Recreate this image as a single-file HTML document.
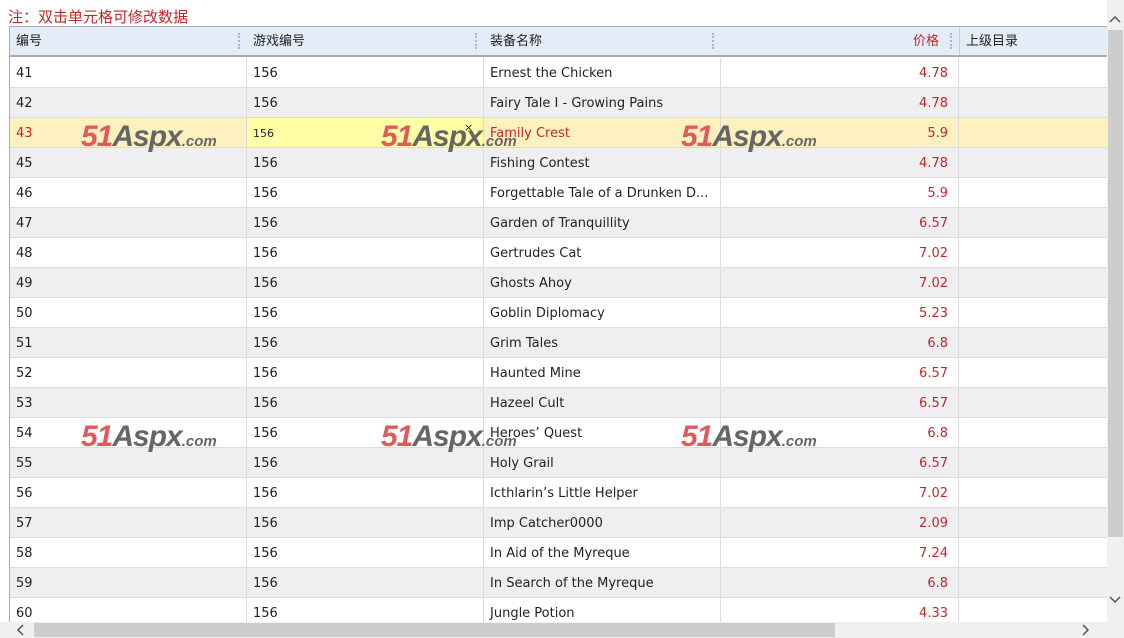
<!DOCTYPE html>
<html><head><meta charset="utf-8"><style>
*{margin:0;padding:0;box-sizing:border-box}
body{width:1124px;height:638px;overflow:hidden;background:#fff;position:relative;font-family:"DejaVu Sans","Liberation Sans","Noto Sans CJK SC",sans-serif;font-size:13px;color:#222}
.note{position:absolute;left:8px;top:6px;color:#c0282a;font-size:15px;font-family:"Liberation Sans","Noto Sans CJK SC",sans-serif}
.grid{position:absolute;left:9px;top:26px;width:1098px;height:596px;border-left:1px solid #a8adb5;border-top:1px solid #a8adb5;overflow:hidden}
.hdr{position:absolute;left:0;top:0;width:1098px;height:30px;background:#e3ecf7;border-bottom:2px solid #a8adb5;font-family:"Liberation Sans","Noto Sans CJK SC",sans-serif;font-size:13px}
.hdr div{position:absolute;top:0;height:28px;line-height:28px;padding:0 6px}
.dots{position:absolute;top:6px;width:0;height:16px;border-left:2px dotted #b0b4bb}
.row{position:absolute;left:0;width:1098px;height:30px;border-bottom:1px solid #dcdcdc}
.row div{position:absolute;top:0;height:29px;line-height:31px;padding:0 6px;border-right:1px solid #dcdcdc}
.c1{left:0;width:237px}.c2{left:237px;width:237px}.c3{left:474px;width:237px}.c4{left:711px;width:238px;text-align:right;color:#c0282a;padding-right:10px!important}.c5{left:949px;width:149px;border-right:none!important}
.alt{background:#efeff2}
.wm{position:absolute;font-family:"Liberation Sans",sans-serif;font-weight:bold;font-style:italic;font-size:30px;letter-spacing:-1px;line-height:30px;white-space:nowrap}
.wm b{color:#e05a5a}.wm i{color:#666;font-style:italic}.wm s{text-decoration:none;font-size:15px;color:#666;font-weight:bold;letter-spacing:0}
.vs{position:absolute;left:1107px;top:0;width:17px;height:622px;background:#f0f0f0}
.hs{position:absolute;left:0;top:622px;width:1124px;height:16px;background:#f0f0f0}
</style></head><body>
<div class="note">注：双击单元格可修改数据</div>
<div class="grid">
<div class="hdr">
<div style="left:0">编号</div><span class="dots" style="left:228px"></span>
<div style="left:237px">游戏编号</div><span class="dots" style="left:465px"></span>
<div style="left:474px">装备名称</div><span class="dots" style="left:702px"></span>
<div style="left:711px;width:238px;text-align:right;padding-right:20px;color:#c0282a">价格</div><span class="dots" style="left:940px"></span>
<div style="left:949px;border-left:1px solid #c8ccd2">上级目录</div>
</div>
<div id="rows"></div>
</div>
<div class="vs"><svg width="17" height="622" style="position:absolute;left:0;top:0"><path d="M3 22 L8 17 L13 22" fill="none" stroke="#555" stroke-width="1.5"/><rect x="1" y="30" width="15" height="507" fill="#cdcdcd"/><path d="M3 597 L8 602 L13 597" fill="none" stroke="#555" stroke-width="1.5"/></svg></div>
<div class="hs"><svg width="1124" height="16" style="position:absolute;left:0;top:0"><path d="M23 3 L18 8 L23 13" fill="none" stroke="#555" stroke-width="1.5"/><rect x="34" y="1" width="801" height="14" fill="#cdcdcd"/><path d="M1083 3 L1088 8 L1083 13" fill="none" stroke="#555" stroke-width="1.5"/></svg></div>
<script>
var d=[[41,"Ernest the Chicken","4.78"],[42,"Fairy Tale I - Growing Pains","4.78"],[43,"Family Crest","5.9"],[45,"Fishing Contest","4.78"],[46,"Forgettable Tale of a Drunken D...","5.9"],[47,"Garden of Tranquillity","6.57"],[48,"Gertrudes Cat","7.02"],[49,"Ghosts Ahoy","7.02"],[50,"Goblin Diplomacy","5.23"],[51,"Grim Tales","6.8"],[52,"Haunted Mine","6.57"],[53,"Hazeel Cult","6.57"],[54,"Heroes’ Quest","6.8"],[55,"Holy Grail","6.57"],[56,"Icthlarin’s Little Helper","7.02"],[57,"Imp Catcher0000","2.09"],[58,"In Aid of the Myreque","7.24"],[59,"In Search of the Myreque","6.8"],[60,"Jungle Potion","4.33"]];
var h="";
d.forEach(function(r,i){
 var top=31+i*30,cls="row"+(i%2?" alt":""),st="top:"+top+"px";
 if(i==2){st+=";background:#fff0c0";
  h+='<div class="'+cls+'" style="'+st+'"><div class="c1" style="color:#c0282a">'+r[0]+'</div><div class="c2" style="background:#ffffa8;font-size:11px">156<span style="position:absolute;left:217px;top:-6px;font-size:11px">×</span></div><div class="c3" style="color:#c0282a">'+r[1]+'</div><div class="c4">'+r[2]+'</div><div class="c5"></div></div>';}
 else h+='<div class="'+cls+'" style="'+st+'"><div class="c1">'+r[0]+'</div><div class="c2">156</div><div class="c3">'+r[1]+'</div><div class="c4">'+r[2]+'</div><div class="c5"></div></div>';
});
[95,395].forEach(function(t){[71,371,671].forEach(function(l){h+='<div class="wm" style="left:'+l+'px;top:'+t+'px"><b>51</b><i>Aspx</i><s>.com</s></div>';});});
document.getElementById("rows").innerHTML=h;
</script>
</body></html>
